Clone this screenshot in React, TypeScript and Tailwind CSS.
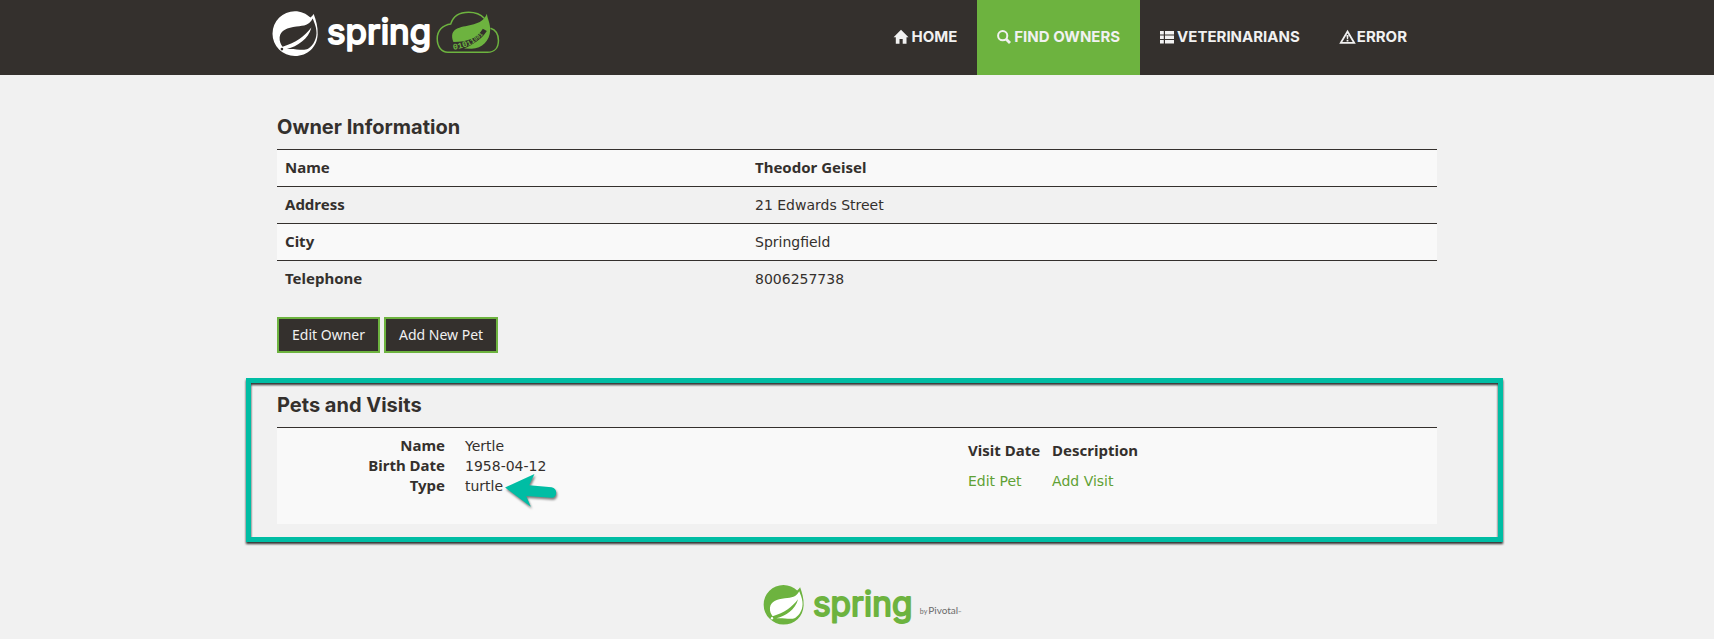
import type { ReactNode } from "react";

const HEADING = "font-['Inter',sans-serif] font-bold";
const BODY = "font-['DejaVu_Sans','Noto_Sans',sans-serif]";
const LABEL = "font-['Noto_Sans','Open_Sans',sans-serif] text-[15px] font-bold leading-[18px] align-top";

function SpringMark({ disc, leaf, className }: { disc: string; leaf: string; className: string }) {
  return (
    <svg viewBox="34 30 142 140" className={className} aria-hidden="true">
      <path
        fill={disc}
        d="M160 41C167 60 173 80 172 103C170 141 142 168 103 168A67.500 67.500 0 0 1 103 33C121 33 138 40 150 52C154 49 157 45 160 41Z"
      />
      <path
        fill={leaf}
        d="M157 55C146 75 132 77 108 79C80 82 60 91 57 111C56 124 61 133 66 140C107 128 131 110 153 82C144 117 111 139 79 147C106 145 128 153 143 146C160 136 171 113 168 91C167 78 161 66 157 55Z"
      />
      <circle cx="64" cy="147" r="4" fill={leaf} />
    </svg>
  );
}

function SpringWord({ color, className }: { color: string; className: string }) {
  return (
    <svg viewBox="0 0 110 46" className={`overflow-visible ${className}`} role="img" aria-label="spring">
      <text
        x="2"
        y="34"
        fill={color}
        stroke={color}
        strokeWidth="2"
        strokeLinejoin="round"
        className="font-['Inter',sans-serif] text-[35px] font-normal"
      >
        spring
      </text>
    </svg>
  );
}

function CloudMark() {
  return (
    <svg viewBox="524 28 198 136" className="h-[45px] w-[66px]" aria-hidden="true">
      <path
        d="M562 156C543 155 530 139 530 115C530 90 547 73 571 70C578 47 598 35 625 35C645 35 662 42 672 53M691 83C707 88 715 102 715 120C715 142 703 156 682 156H562"
        fill="none"
        stroke="#6db33f"
        strokeWidth="4.500"
      />
      <path
        fill="#6db33f"
        d="M680 39C682 55 691 69 690 89C689 120 666 144 634 145L611 144C640 132 662 116 674 89C655 110 622 124 579 125C571 104 575 91 592 83C620 71 665 77 680 39Z"
      />
      <path d="M578 138C618 136 655 119 674 88" fill="none" stroke="#34302d" strokeWidth="14" />
      <path id="leaf-vein" d="M578 148C622 143 652 126 680 88" fill="none" />
      <text fill="#6db33f" className="font-['Liberation_Mono',monospace] text-[26px] font-bold">
        <textPath href="#leaf-vein">
          010<tspan className="text-[22px]">11</tspan>
          <tspan className="text-[17px]">001</tspan>
        </textPath>
      </text>
    </svg>
  );
}

function Glyph({ children }: { children: ReactNode }) {
  return (
    <svg viewBox="0 0 14 14" className="size-3.5 shrink-0 overflow-visible" fill="currentColor" aria-hidden="true">
      {children}
    </svg>
  );
}

const navItems = [
  { label: "Home", active: false, icon: <path d="M7 -.3L14.500 7.300H12.500V13.700H8.700V9H5.500V13.700H1.800V7.300H-.4Z" /> },
  {
    label: "Find owners",
    active: true,
    icon: (
      <g fill="none" stroke="currentColor">
        <circle cx="5.700" cy="5.700" r="4.600" strokeWidth="2" />
        <path d="M9 9L13 13" strokeWidth="2.800" />
      </g>
    ),
  },
  {
    label: "Veterinarians",
    active: false,
    icon: <path d="M0 1H3.800V4.500H0ZM5 1H14V4.500H5ZM0 5.500H3.800V9H0ZM5 5.500H14V9H5ZM0 10H3.800V13.500H0ZM5 10H14V13.500H5Z" />,
  },
  {
    label: "Error",
    active: false,
    icon: (
      <>
        <path d="M7.500 1.500L14.200 12.800H.8Z" fill="none" stroke="currentColor" strokeWidth="1.800" />
        <path d="M6.400 5H8.600L8.100 9H6.900ZM6.600 9.800H8.400V11.500H6.600Z" />
      </>
    ),
  },
];

const owner = [
  ["Name", "Theodor Geisel"],
  ["Address", "21 Edwards Street"],
  ["City", "Springfield"],
  ["Telephone", "8006257738"],
];

const pet = [
  ["Name", "Yertle"],
  ["Birth Date", "1958-04-12"],
  ["Type", "turtle"],
];

function ActionButton({ children }: { children: ReactNode }) {
  return (
    <button
      type="button"
      className="border-2 border-[#6db33f] bg-[#34302d] px-[13px] py-1.5 font-['Noto_Sans',sans-serif] text-sm leading-5 text-[#f1f1f1]"
    >
      {children}
    </button>
  );
}

export default function App() {
  return (
    <div className={`${BODY} min-h-screen bg-[#f1f1f1] text-sm leading-5 text-[#34302d]`}>
      <header className="bg-[#34302d]">
        <div className="mx-auto flex h-[75px] max-w-[1170px] items-start justify-between">
          <a href="#home" className="flex items-start pt-2.5" aria-label="Spring PetClinic">
            <SpringMark disc="#ffffff" leaf="#34302d" className="h-[47px] w-[47px]" />
            <SpringWord color="#ffffff" className="ml-1.5 h-[46px] w-[110px]" />
            <CloudMark />
          </a>
          <nav className="flex pr-[15px]">
            {navItems.map((item) => (
              <a
                key={item.label}
                href={`#${item.label.toLowerCase().replace(" ", "-")}`}
                className={`${HEADING} flex h-[75px] items-center gap-[3px] px-5 pb-0.5 text-[15px] uppercase text-[#f1f1f1] ${
                  item.active ? "bg-[#6db33f]" : ""
                }`}
              >
                <Glyph>{item.icon}</Glyph>
                {item.label}
              </a>
            ))}
          </nav>
        </div>
      </header>

      <main className="mx-auto max-w-[1160px] pt-[42px]">
        <h2 className={`${HEADING} mb-3 text-xl leading-5`}>Owner Information</h2>
        <table className="mb-5 w-full border-separate border-spacing-0">
          <tbody>
            {owner.map(([label, value], i) => (
              <tr key={label} className="h-[37px] odd:bg-[#f9f9f9]">
                <th scope="row" className={`${LABEL} w-[470px] border-t border-[#34302d] p-2 text-left`}>
                  {label}
                </th>
                <td className={`border-t border-[#34302d] p-2 ${i === 0 ? LABEL : "align-top leading-5"}`}>{value}</td>
              </tr>
            ))}
          </tbody>
        </table>
        <div className="flex gap-1">
          <ActionButton>Edit Owner</ActionButton>
          <ActionButton>Add New Pet</ActionButton>
        </div>

        <section className="relative mt-[42px]">
          <h2 className={`${HEADING} mb-3 text-xl leading-5`}>Pets and Visits</h2>
          <div className="flex border-t border-[#34302d] bg-[#f9f9f9] p-2">
            <dl className="mb-5 grid w-[683px] grid-cols-[160px_1fr] gap-x-5">
              {pet.map(([label, value]) => (
                <div key={label} className="contents">
                  <dt className={`${LABEL} text-right`}>{label}</dt>
                  <dd>
                    <span className="relative">
                      {value}
                      {label === "Type" && (
                        <svg
                          viewBox="490 152 170 112"
                          className="absolute -top-1.5 left-full h-[37px] w-[57px] drop-shadow-[1px_2px_1px_rgba(0,0,0,0.5)]"
                          aria-hidden="true"
                        >
                          <path
                            fill="#00bda4"
                            d="M495 199L584 158L568 192L636 198C655 200 654 231 635 230L559 225L573 257Z"
                          />
                        </svg>
                      )}
                    </span>
                  </dd>
                </div>
              ))}
            </dl>
            <table className="h-fit border-separate border-spacing-0">
              <thead>
                <tr className="h-[30px]">
                  <th className={`${LABEL} py-[5px] pr-3 text-left`}>Visit Date</th>
                  <th className={`${LABEL} py-[5px] text-left`}>Description</th>
                </tr>
              </thead>
              <tbody>
                <tr>
                  <td className="py-[5px] pr-3">
                    <a href="#edit-pet" className="text-[#5fa134]">Edit Pet</a>
                  </td>
                  <td className="py-[5px]">
                    <a href="#add-visit" className="text-[#5fa134]">Add Visit</a>
                  </td>
                </tr>
              </tbody>
            </table>
          </div>
          <div className="pointer-events-none absolute -top-[17px] -right-[66px] -bottom-[18px] -left-[31px] border-[5px] border-[#00bda4] drop-shadow-[0_2px_1px_rgba(0,0,0,0.8)]" />
        </section>
      </main>

      <footer className="mx-auto flex max-w-[1160px] items-start justify-center pt-[60px] pl-2.5">
        <SpringMark disc="#6db33f" leaf="#ffffff" className="h-[41px] w-[42px]" />
        <SpringWord color="#6db33f" className="ml-1.5 h-[44px] w-[105px]" />
        <p className="mt-[18px] ml-1 flex items-baseline font-['Lato',sans-serif] text-[10px] leading-4 text-[#6b6b6b]">
          <span className="text-[7px]">by</span>
          <span className="ml-px">Pivotal</span>
          <span className="text-[4px]">™</span>
        </p>
      </footer>
    </div>
  );
}
